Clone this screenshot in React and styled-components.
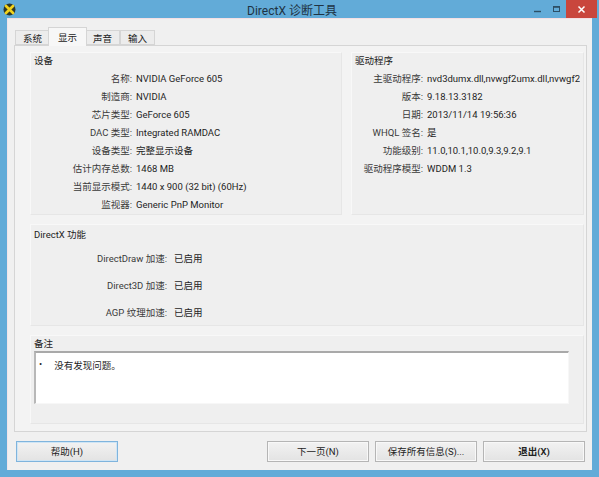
import styled, { createGlobalStyle } from "styled-components";

const Global = createGlobalStyle`
  html, body {
    margin: 0;
    padding: 0;
    width: 599px;
    height: 477px;
    overflow: hidden;
    background: #62abd8;
  }
  * { box-sizing: border-box; }
`;

const Window = styled.div`
  width: 599px;
  height: 477px;
  display: flex;
  flex-direction: column;
  background: #62abd8;
  padding: 0 7px 7px 7px;
  font-family: Roboto, "Noto Sans CJK SC", sans-serif;
  font-size: 9.5px;
  color: #1e1e1e;
`;

const TitleBar = styled.div`
  height: 18px;
  display: flex;
  align-items: center;
`;

const AppIcon = styled.svg`
  width: 13px;
  height: 13px;
  margin-left: -4px;
`;

const Title = styled.div`
  flex: 1;
  text-align: center;
  font-size: 12px;
  color: #1f3344;
  padding-left: 40px;
`;

const Caption = styled.div`
  display: flex;
  align-items: stretch;
  height: 18px;
  margin-right: -5px;
`;

const CapButton = styled.div`
  width: ${(p) => (p.$close ? "31px" : "19px")};
  display: flex;
  align-items: center;
  justify-content: center;
  background: ${(p) => (p.$close ? "#c9463d" : "transparent")};
`;

const Client = styled.div`
  flex: 1;
  background: #f0f0f0;
  display: flex;
  flex-direction: column;
  padding: 9px 5px 0 6px;
  border-top: 1px solid #f4dfe4;
  border-left: 1px solid #f2e4ea;
`;

const Tabs = styled.div`
  display: flex;
  padding-left: 1px;
  height: 17px;
  align-items: flex-end;
`;

const Tab = styled.div`
  height: ${(p) => (p.$active ? "19px" : "15px")};
  padding: 0 ${(p) => (p.$active ? "9px" : "7px")};
  margin: 0 ${(p) => (p.$active ? "-2px" : "0")};
  margin-bottom: ${(p) => (p.$active ? "-1px" : "0")};
  display: flex;
  align-items: center;
  border: 1px solid #d5d5d5;
  border-bottom: ${(p) => (p.$active ? "none" : "1px solid #d5d5d5")};
  background: ${(p) => (p.$active ? "#f7f7f7" : "#ececec")};
  position: relative;
  z-index: ${(p) => (p.$active ? 2 : 1)};
  color: #222;
`;

const Panel = styled.div`
  height: 387px;
  border: 1px solid #d5d5d5;
  background: #f3f3f3;
  padding: 6px 2px 7px 15px;
  display: flex;
  flex-direction: column;
  gap: 9px;
`;

const TopRow = styled.div`
  display: flex;
  gap: 9px;
`;

const Group = styled.div`
  width: ${(p) => p.$w || "auto"};
  flex: ${(p) => (p.$w ? "none" : 1)};
  height: ${(p) => p.$h};
  background: #efefef;
  border: 1px solid #f8f8f8;
  border-right-color: #e6e6e6;
  border-bottom-color: #e6e6e6;
  padding: 0 3px;
  display: flex;
  flex-direction: column;
`;

const GroupTitle = styled.div`
  height: ${(p) => p.$h || "16px"};
  line-height: ${(p) => p.$h || "16px"};
  color: #222;
`;

const Grid = styled.div`
  display: grid;
  grid-template-columns: ${(p) => p.$label}px 1fr;
  column-gap: ${(p) => p.$gap}px;
  grid-auto-rows: ${(p) => p.$row}px;
  align-items: center;
`;

const Label = styled.div`
  text-align: right;
  color: #3a3a3a;
  white-space: nowrap;
`;

const Value = styled.div`
  white-space: nowrap;
  overflow: hidden;
  color: #1e1e1e;
`;

const Notes = styled.div`
  width: 535px;
  height: 53px;
  background: #fff;
  border-top: 2px solid #a9a9a9;
  border-left: 2px solid #b8b8b8;
  border-right: 1px solid #f7f7f7;
  border-bottom: 1px solid #f7f7f7;
  padding: 5px 0 0 3px;
  display: flex;
  gap: 12px;
`;

const Buttons = styled.div`
  flex: 1;
  display: flex;
  align-items: center;
  padding: 0 0 0 2px;
`;

const Button = styled.div`
  width: 102px;
  height: 21px;
  display: flex;
  align-items: center;
  justify-content: center;
  border: 1px solid ${(p) => (p.$focus ? "#7fb4dd" : "#b5b5b5")};
  background: linear-gradient(#f2f2f2, #e3e3e3);
  box-shadow: inset 0 0 0 1px ${(p) => (p.$focus ? "#cfe5f5" : "#f8f8f8")};
  margin-left: ${(p) => p.$ml || "0"};
  margin-right: ${(p) => (p.$last ? "2px" : "6px")};
  color: #222;
  font-weight: ${(p) => (p.$bold ? 600 : 400)};
`;

const device = [
  ["名称:", "NVIDIA GeForce 605"],
  ["制造商:", "NVIDIA"],
  ["芯片类型:", "GeForce 605"],
  ["DAC 类型:", "Integrated RAMDAC"],
  ["设备类型:", "完整显示设备"],
  ["估计内存总数:", "1468 MB"],
  ["当前显示模式:", "1440 x 900 (32 bit) (60Hz)"],
  ["监视器:", "Generic PnP Monitor"],
];

const driver = [
  ["主驱动程序:", "nvd3dumx.dll,nvwgf2umx.dll,nvwgf2"],
  ["版本:", "9.18.13.3182"],
  ["日期:", "2013/11/14 19:56:36"],
  ["WHQL 签名:", "是"],
  ["功能级别:", "11.0,10.1,10.0,9.3,9.2,9.1"],
  ["驱动程序模型:", "WDDM 1.3"],
];

const features = [
  ["DirectDraw 加速:", "已启用"],
  ["Direct3D 加速:", "已启用"],
  ["AGP 纹理加速:", "已启用"],
];

const Rows = ({ rows }) =>
  rows.map(([l, v]) => [<Label key={l}>{l}</Label>, <Value key={l + "-v"}>{v}</Value>]);

export default function App() {
  return (
    <>
      <Global />
      <Window>
        <TitleBar>
          <AppIcon viewBox="0 0 13 13">
            <circle cx="6.5" cy="6.5" r="6" fill="#2f3a2a" />
            <path d="M3 3 L10 10 M10 3 L3 10" stroke="#f2d21b" strokeWidth="2.6" strokeLinecap="round" />
          </AppIcon>
          <Title>DirectX 诊断工具</Title>
          <Caption>
            <CapButton>
              <svg width="9" height="9" viewBox="0 0 9 9">
                <path d="M1 6.5 H8" stroke="#2d4f66" strokeWidth="1.4" />
              </svg>
            </CapButton>
            <CapButton>
              <svg width="9" height="9" viewBox="0 0 9 9">
                <rect x="1.5" y="1.5" width="6" height="5" fill="none" stroke="#2d4f66" strokeWidth="1" />
                <path d="M1.5 2 H7.5" stroke="#2d4f66" strokeWidth="1.6" />
              </svg>
            </CapButton>
            <CapButton $close>
              <svg width="9" height="9" viewBox="0 0 9 9">
                <path d="M1.5 1.5 L7.5 7.5 M7.5 1.5 L1.5 7.5" stroke="#fff" strokeWidth="1.5" />
              </svg>
            </CapButton>
          </Caption>
        </TitleBar>
        <Client>
          <Tabs>
            <Tab>系统</Tab>
            <Tab $active>显示</Tab>
            <Tab>声音</Tab>
            <Tab>输入</Tab>
          </Tabs>
          <Panel>
            <TopRow>
              <Group $w="312px" $h="163px">
                <GroupTitle>设备</GroupTitle>
                <Grid $label={98} $gap={4} $row={18}>
                  <Rows rows={device} />
                </Grid>
              </Group>
              <Group $h="163px">
                <GroupTitle>驱动程序</GroupTitle>
                <Grid $label={68} $gap={4} $row={18}>
                  <Rows rows={driver} />
                </Grid>
              </Group>
            </TopRow>
            <Group $h="110px">
              <GroupTitle $h="19px">DirectX 功能</GroupTitle>
              <Grid $label={133} $gap={7} $row={27}>
                <Rows rows={features} />
              </Grid>
            </Group>
            <Group $h="82px">
              <GroupTitle $h="15px">备注</GroupTitle>
              <Notes>
                <span>•</span>
                <span>没有发现问题。</span>
              </Notes>
            </Group>
          </Panel>
          <Buttons>
            <Button $focus>帮助(H)</Button>
            <Button $ml="auto">下一页(N)</Button>
            <Button>保存所有信息(S)...</Button>
            <Button $bold $last>退出(X)</Button>
          </Buttons>
        </Client>
      </Window>
    </>
  );
}
